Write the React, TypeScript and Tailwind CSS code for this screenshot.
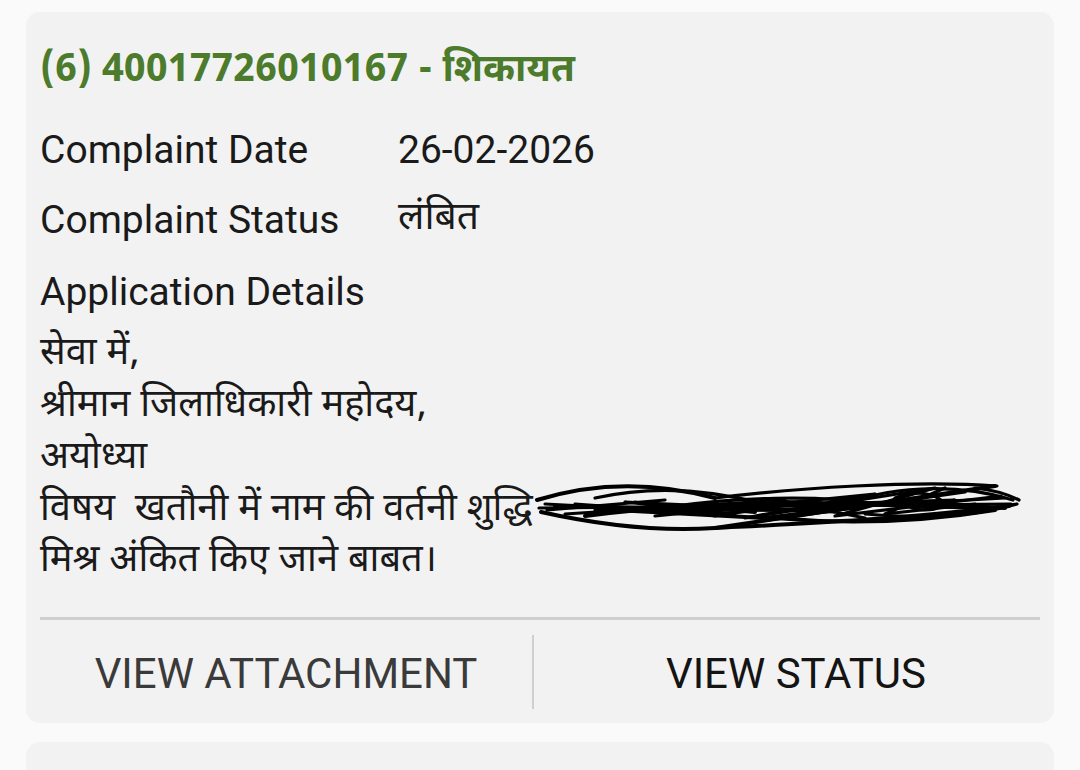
import React from "react";

function Scribble() {
  const paths = [
    "M2 22 C 60 4, 120 4, 180 20",
    "M180 20 C 260 10, 380 2, 462 8",
    "M4 30 L 476 26",
    "M6 34 C 60 46, 120 54, 180 50 C 260 46, 360 42, 474 28",
    "M10 26 L 200 36 L 90 24 L 300 34 L 160 30 L 420 22 L 250 32 L 470 20",
    "M30 36 L 250 22 L 120 38 L 340 16 L 210 40 L 400 10 L 300 38 L 466 18",
    "M180 50 L 460 8",
    "M220 44 L 430 14",
    "M60 20 Q 140 2 230 26",
    "M240 40 Q 350 50 460 32",
    "M300 30 C 350 8, 420 4, 478 22",
    "M330 36 Q 420 44 482 26 L 440 32",
    "M80 32 L 230 40 L 360 24 L 470 30",
    "M140 28 C 200 20, 280 16, 340 26",
    "M410 10 L 350 36 L 440 26",
    "M20 28 C 120 30, 220 34, 320 30",
    "M100 24 L 180 38 L 260 26 L 330 40",
    "M360 20 C 380 12, 400 14, 410 26 C 400 34, 380 34, 370 26",
    "M250 24 L 450 30",
    "M440 10 C 460 12, 476 18, 484 22",
    "M40 26 L 150 34 L 60 32 L 190 26",
    "M50 38 C 110 30, 160 28, 220 34",
    "M12 32 L 130 22",
  ];
  return (
    <svg width="486" height="62" viewBox="0 0 486 62" className="block">
      {paths.map((d, i) => (
        <path key={i} d={d} fill="none" stroke="#000" strokeWidth={i % 3 === 0 ? 4 : 3.2} strokeLinecap="round" strokeLinejoin="round" />
      ))}
    </svg>
  );
}

export default function App() {
  const hindi = "'Noto Sans Devanagari', 'Noto Sans', Roboto, sans-serif";
  return (
    <div
      className="w-[1080px] h-[770px] bg-[#fafafa] overflow-hidden pt-[12px] pl-[26px]"
      style={{ fontFamily: "Roboto, 'Noto Sans', sans-serif" }}
    >
      <div className="w-[1028px] h-[711px] rounded-[14px] bg-[#f2f2f2] pt-[40px] px-[14px] flex flex-col">
        <div className="h-[56px] leading-[56px] text-[38.6px] font-bold text-[#4b7b2b] whitespace-nowrap -mt-[8px]" style={{ fontFamily: hindi }}>
          (6) 40017726010167 - शिकायत
        </div>
        <div className="h-[70px] mt-[15px] flex items-center text-[39px] text-[#1a1a1a]">
          <div className="w-[358px]">Complaint Date</div>
          <div>26-02-2026</div>
        </div>
        <div className="h-[70px] flex items-center text-[39px] text-[#1a1a1a]">
          <div className="w-[358px]">Complaint Status</div>
          <div style={{ fontFamily: hindi }}>लंबित</div>
        </div>
        <div className="h-[70px] mt-[2px] flex items-center text-[39px] text-[#1a1a1a]">Application Details</div>
        <div className="mt-[2px] text-[38px] leading-[52px] text-[#1a1a1a]" style={{ fontFamily: hindi }}>
          <div>सेवा में,</div>
          <div>श्रीमान जिलाधिकारी महोदय,</div>
          <div>अयोध्या</div>
          <div className="flex items-center whitespace-nowrap h-[51px]">
            <span>विषय&nbsp; खतौनी में नाम की वर्तनी शुद्धि</span>
            <span className="self-start ml-[2px] -mt-[7px]">
              <Scribble />
            </span>
          </div>
          <div>मिश्र अंकित किए जाने बाबत।</div>
        </div>
        <div className="mt-[29px] h-[3px] bg-[#cfcfcf]" />
        <div className="flex-1 flex items-center pt-[4px]">
          <div className="w-[492px] text-center text-[42px] text-[#3a3a3a]">VIEW ATTACHMENT</div>
          <div className="w-[2px] h-[74px] -mt-[4px] bg-[#cfcfcf]" />
          <div className="flex-1 pl-[18px] text-center text-[42px] text-[#141414]">VIEW STATUS</div>
        </div>
      </div>
      <div className="w-[1028px] h-[40px] mt-[19px] rounded-[14px] bg-[#f2f2f2]" />
    </div>
  );
}
